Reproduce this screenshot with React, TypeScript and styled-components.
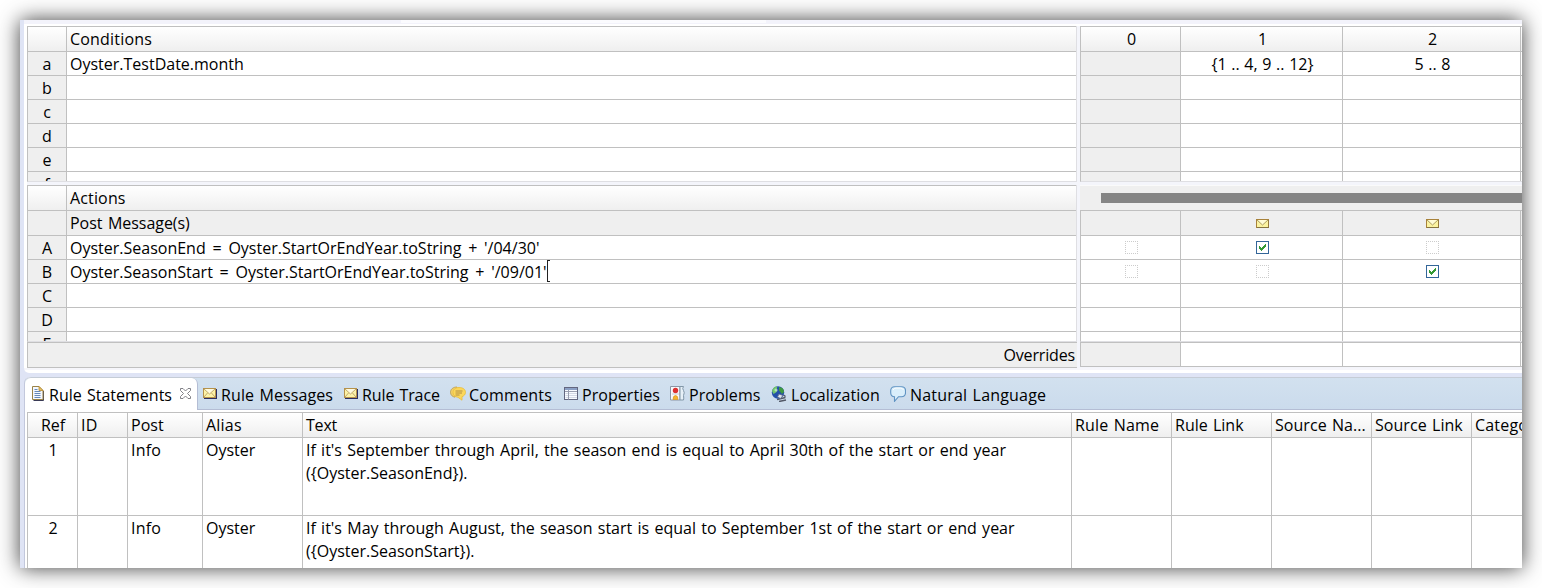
import React from "react";
import styled, { createGlobalStyle } from "styled-components";

const LINE = "#c0c0c0";
const SOFT = "#dfdfe3";
const HEAD = "linear-gradient(#ffffff, #efefef)";

const GlobalStyle = createGlobalStyle`
  body { margin: 0; background: #fff; overflow: hidden; }
  *, *::before, *::after { box-sizing: border-box; }
  #root { font-family: "Open Sans", "Noto Sans", sans-serif; font-size: 16px; line-height: 24px; word-spacing: 1.1px; color: #000; }
`;

const Page = styled.div`
  width: 1542px;
  height: 588px;
  padding: 20px;
  overflow: hidden;
`;

const Window = styled.div`
  width: 1502px;
  height: 548px;
  padding-left: 4px;
  overflow: hidden;
  background: #dfe4f5;
  box-shadow: 0 0 20px rgba(0, 0, 0, 0.76);
`;

const Editor = styled.div`
  height: 353px;
  padding: 4px 0 0 1px;
  background:
    linear-gradient(#fbfbfe, #fbfbfe) 377px 0 / 365px 3px no-repeat,
    linear-gradient(#f3f3fb 4px, #ffffff 4px, #ffffff 348px, #f6f6fb 348px, #f6f6fb 350px, #ffffff 350px);
  border-bottom-left-radius: 5px;
`;

const Split = styled.div`
  display: flex;
  gap: 3px;
  margin: 2px 0 0 2px;
  height: 342px;
  background: #f4f5fb;
`;

const LeftPane = styled.div`
  width: 1050px;
  display: flex;
  flex-direction: column;
`;

const RightPane = styled.div`
  width: 442px;
  overflow: hidden;
  display: flex;
  flex-direction: column;
`;

const Grid = styled.div<{ $h: number; $edge?: boolean }>`
  height: ${(p) => p.$h}px;
  overflow: hidden;
  flex: none;
  background: #fff;
  border-left: 1px solid ${LINE};
  border-bottom: 1px solid ${SOFT};
  border-right: ${(p) => (p.$edge ? `1px solid ${SOFT}` : "none")};
`;

const Gap = styled.div`
  height: 3px;
  flex: none;
`;

const Row = styled.div<{ $h?: number; $bg?: string; $top?: boolean }>`
  display: flex;
  height: ${(p) => p.$h ?? 24}px;
  background: ${(p) => p.$bg ?? "#fff"};
  border-bottom: 1px solid ${LINE};
  border-top: ${(p) => (p.$top ? `1px solid ${LINE}` : "none")};
`;

const RowKey = styled.div<{ $bg?: string }>`
  width: 39px;
  flex: none;
  text-align: center;
  background: ${(p) => p.$bg ?? "#efefef"};
  border-right: 1px solid ${LINE};
`;

const RowText = styled.div<{ $ls?: number; $ws?: number }>`
  flex: 1;
  padding-left: 3px;
  white-space: pre;
  letter-spacing: ${(p) => p.$ls ?? 0}px;
  word-spacing: ${(p) => p.$ws ?? 0}px;
`;

const Caret = styled.span`
  display: inline-block;
  width: 3px;
  height: 22px;
  vertical-align: top;
  border: solid #222;
  border-width: 1px 0 1px 1px;
`;

const Cell = styled.div<{ $w: number; $bg?: string }>`
  width: ${(p) => p.$w}px;
  flex: none;
  display: flex;
  justify-content: center;
  padding-left: 2px;
  background: ${(p) => p.$bg ?? "transparent"};
  border-right: 1px solid ${LINE};
  white-space: pre;
  word-spacing: 0.5px;
`;

const ScrollHeader = styled.div`
  height: 25px;
  flex: none;
  padding: 7px 0 0 21px;
  background: #efefef;
  border-top: 1px solid #fafafa;
`;

const ScrollThumb = styled.div`
  height: 10px;
  background: #858585;
`;

const OverridesLabel = styled.div`
  height: 26px;
  border: 1px solid ${LINE};
  border-right: none;
  background: #efefef;
  text-align: right;
  padding-right: 2px;
  letter-spacing: -0.15px;
`;

const OverridesRow = styled.div`
  display: flex;
  height: 25px;
  border: 1px solid ${LINE};
  border-right: none;
  background: #fff;
`;

const IconSlot = styled.span<{ $top: number }>`
  display: block;
  line-height: 0;
  padding-top: ${(p) => p.$top}px;
`;

const Views = styled.div`
  margin-top: 4px;
  height: 191px;
  background: #fff;
  border-left: 1px solid #c3c8dc;
  border-top-left-radius: 6px;
`;

const TabBar = styled.div`
  display: flex;
  height: 33px;
  background: linear-gradient(#d2e1ef, #cbdbec);
  border-top: 1px solid #c5ccd6;
  border-bottom: 1px solid #b4bdd4;
  border-top-left-radius: 6px;
`;

const Tab = styled.div<{ $w: number; $ls: number; $gap: number }>`
  width: ${(p) => p.$w}px;
  flex: none;
  display: flex;
  padding-top: 5px;
  gap: ${(p) => p.$gap}px;
  white-space: pre;
  letter-spacing: ${(p) => p.$ls}px;
  svg { flex: none; margin-top: 3px; }
`;

const ActiveTab = styled(Tab)`
  height: 32px;
  background: #fff;
  padding-left: 7px;
  margin-right: 5px;
  border-right: 1px solid #b4bdd4;
  border-top-right-radius: 6px;
  border-top-left-radius: 6px;
`;

const TabTitle = styled.span`
  width: 126px;
`;

const Table = styled.div`
  margin: 2px 0 0 2px;
  border-left: 1px solid ${LINE};
  border-top: 1px solid ${LINE};
`;

const TCell = styled.div<{ $w: number; $ls?: number; $center?: boolean }>`
  width: ${(p) => p.$w}px;
  flex: none;
  overflow: hidden;
  padding-left: ${(p) => (p.$center ? 1 : 3)}px;
  text-align: ${(p) => (p.$center ? "center" : "left")};
  border-right: 1px solid ${LINE};
  white-space: pre;
  letter-spacing: ${(p) => p.$ls ?? 0}px;
`;

const TextLine = styled.div`
  height: 23px;
`;

const Envelope = () => (
  <svg width="13" height="9" viewBox="0 0 13 9">
    <rect x="0.5" y="0.5" width="12" height="8" fill="#fbf3a0" stroke="#a8823a" />
    <path d="M1 8.5h12V1" fill="none" stroke="#86743f" />
    <path d="M2 1h9L6.500 6z" fill="#fffcd8" />
    <path d="M1 1l5.500 5L12 1" fill="none" stroke="#b0a068" />
  </svg>
);

const TabEnvelope = () => (
  <svg width="14" height="15" viewBox="0 0 14 15">
    <path d="M1 12.500h13M13.500 3v10" stroke="#2c2f62" fill="none" />
    <rect x="0.500" y="2.500" width="12" height="9" fill="#fdf3a8" stroke="#b5924c" />
    <path d="M1.500 3h10L6.500 8z" fill="#fffbe0" />
    <path d="M1 3l5.500 5L12 3M1 11l3.500-4M12 11L8.500 7" fill="none" stroke="#b9a069" strokeWidth="0.9" />
  </svg>
);

const CheckOn = () => (
  <svg width="13" height="13" viewBox="0 0 13 13" shapeRendering="crispEdges">
    <rect x="0" y="0" width="13" height="13" fill="#336699" />
    <rect x="1" y="1" width="11" height="11" fill="#fff" />
    <path
      d="M3.500 5v3M4.500 6v3M5.500 7v3M6.500 6v3M7.500 5v3M8.500 4v3M9.500 3v3"
      stroke="#339933"
      strokeWidth="1"
    />
  </svg>
);

const CheckOff = () => (
  <svg width="13" height="13" viewBox="0 0 13 13" shapeRendering="crispEdges">
    <path d="M0 .5h13M0 12.500h13M.5 0v13M12.500 0v13" stroke="#cccccc" strokeDasharray="1 1" fill="none" />
  </svg>
);

const DocIcon = () => (
  <svg width="12" height="15" viewBox="0 0 12 15">
    <path d="M1.500 14.500h10V5" stroke="#393a55" fill="none" />
    <path d="M.5.500h6.500l4 4v9H.5z" fill="#f4f8ff" stroke="#9a8348" />
    <path d="M7 .5v4h4z" fill="#e8c468" stroke="#b78a30" strokeWidth=".8" />
    <path d="M2.500 3.500h3M2.500 5.500h6M2.500 7.500h6M2.500 9.500h6M2.500 11.500h6" stroke="#6688b8" />
  </svg>
);

const CloseIcon = () => (
  <svg width="11" height="14" viewBox="0 0 11 14">
    <path d="M.5 2.500h2.500l2.500 2.500L8 2.500h2.500V4.500L7.500 7.500l3 3v2H8L5.500 10 3 12.500H.5v-2l3-3-3-3z" fill="#fff" stroke="#74747a" strokeWidth=".9" />
  </svg>
);

const CommentIcon = () => (
  <svg width="16" height="15" viewBox="0 0 16 15">
    <path d="M7 1C3 1 .5 3.300.5 6.200c0 3 2 4.500 4.500 5z" fill="#f0cf6a" stroke="#b99b4e" strokeWidth=".8" />
    <path d="M9 1.500c4 0 6.500 2 6.500 4.800 0 2-1.500 3.700-3.500 4.400v3.500L8 11.300C4.800 11 3 9 3 6.500 3 3.500 5.500 1.500 9 1.500z" fill="#fbd75b" stroke="#eabd36" strokeWidth=".8" />
    <path d="M5.500 5h7M5.500 7h6.500M5.500 9h4" stroke="#a98744" strokeWidth=".9" />
  </svg>
);

const PropertiesIcon = () => (
  <svg width="14" height="15" viewBox="0 0 14 15">
    <rect x=".5" y="1.500" width="13" height="12" fill="#f8fbff" stroke="#63677f" />
    <path d="M1 3h12" stroke="#8ba0c5" strokeWidth="2" />
    <path d="M1 5.500h12M4.500 4v9.500" stroke="#9a9fb0" />
    <path d="M5 7.500h8M5 9.500h8M5 11.500h8M1.500 7.500h2.500M1.500 9.500h2.500M1.500 11.500h2.500" stroke="#c4cada" strokeWidth=".7" />
  </svg>
);

const ProblemsIcon = () => (
  <svg width="15" height="15" viewBox="0 0 15 15">
    <path d="M.5.500h9.500v13.500H.5z" fill="#f9f9fb" stroke="#8b96a5" />
    <path d="M10 .5h3.500q-1.500 2 0 4t0 5q.5 3 0 4.500H10z" fill="#e7f0f7" stroke="#8297a8" />
    <circle cx="5.500" cy="4.500" r="2.700" fill="#dd3131" />
    <path d="M2 8h7" stroke="#b4bac2" strokeWidth=".7" />
    <path d="M3 13.500q0-4 2.500-4t2.500 4z" fill="#f4b52f" stroke="#d99116" strokeWidth=".6" />
  </svg>
);

const GlobeIcon = () => (
  <svg width="16" height="16" viewBox="0 0 16 16">
    <path d="M6 13.500l8.500-2M8 15.500l7-1.500M12.500 9l2 1.500" stroke="#525867" strokeWidth="1.500" fill="none" />
    <circle cx="7" cy="6.500" r="6.200" fill="#244fa8" />
    <path d="M1 5Q2 1 6 .3 7 2 5 3.500q2 1 0 3L2.500 8z" fill="#72c56b" />
    <path d="M8 1q5 .5 5 5l-2 2-3-3.500z" fill="#3d9a42" />
    <circle cx="5" cy="4" r="1.600" fill="#c9efcb" opacity=".75" />
    <path d="M8 8l4 1.500L9.500 12.500 6.500 11z" fill="#e0e5ed" stroke="#5c6c88" strokeWidth=".8" />
  </svg>
);

const BubbleIcon = () => (
  <svg width="16" height="16" viewBox="0 0 16 16">
    <path d="M4.500.7h7c2.500 0 4 1.800 4 4v2c0 2.500-1.500 4-4 4H8.500L4.500 15.300V10.700C2 10.500.7 9 .7 6.700v-2c0-2.200 1.500-4 3.800-4z" fill="#d9eefb" stroke="#5f93c2" strokeWidth="1.100" />
    <path d="M3 4q1-2 3-2h4.500q2 0 3 2" stroke="#fff" fill="none" />
  </svg>
);

const conditions: { key: string; text?: string; one?: string; two?: string }[] = [
  { key: "a", text: "Oyster.TestDate.month", one: "{1 .. 4, 9 .. 12}", two: "5 .. 8" },
  { key: "b" }, { key: "c" }, { key: "d" }, { key: "e" }, { key: "f" },
];

const actions: { key: string; text?: string; checks?: boolean[]; caret?: boolean }[] = [
  { key: "A", text: "Oyster.SeasonEnd = Oyster.StartOrEndYear.toString + '/04/30'", checks: [false, true, false] },
  { key: "B", text: "Oyster.SeasonStart = Oyster.StartOrEndYear.toString + '/09/01'", checks: [false, false, true], caret: true },
  { key: "C" }, { key: "D" }, { key: "E" },
];

const tabs = [
  { label: "Rule Messages", icon: <TabEnvelope />, w: 141, gap: 4, ls: 0.1 },
  { label: "Rule Trace", icon: <TabEnvelope />, w: 106, gap: 4, ls: -0.1 },
  { label: "Comments", icon: <CommentIcon />, w: 114, gap: 3, ls: 0.2 },
  { label: "Properties", icon: <PropertiesIcon />, w: 106, gap: 4, ls: 0.05 },
  { label: "Problems", icon: <ProblemsIcon />, w: 101, gap: 4, ls: 0.05 },
  { label: "Localization", icon: <GlobeIcon />, w: 119, gap: 4, ls: 0.05 },
  { label: "Natural Language", icon: <BubbleIcon />, w: 180, gap: 4, ls: 0.18 },
];

const columns = [
  { label: "Ref", w: 50, ls: -0.1 },
  { label: "ID", w: 50, ls: 0.3 },
  { label: "Post", w: 75, ls: 0 },
  { label: "Alias", w: 100, ls: 0.2 },
  { label: "Text", w: 769, ls: -0.2 },
  { label: "Rule Name", w: 100, ls: 0.15 },
  { label: "Rule Link", w: 100, ls: 0 },
  { label: "Source Na...", w: 100, ls: 0.05 },
  { label: "Source Link", w: 100, ls: 0.05 },
  { label: "Category", w: 100, ls: 0.2 },
];

const statements = [
  { ref: "1", lines: ["If it's September through April, the season end is equal to April 30th of the start or end year", "({Oyster.SeasonEnd})."] },
  { ref: "2", lines: ["If it's May through August, the season start is equal to September 1st of the start or end year", "({Oyster.SeasonStart})."] },
];

export default function App() {
  return (
    <>
      <GlobalStyle />
      <Page>
        <Window>
          <Editor>
            <Split>
              <LeftPane>
                <Grid $h={156} $edge>
                  <Row $h={26} $bg={HEAD} $top>
                    <RowKey $bg="transparent" />
                    <RowText $ls={0.2}>Conditions</RowText>
                  </Row>
                  {conditions.map((c) => (
                    <Row key={c.key}>
                      <RowKey>{c.key}</RowKey>
                      <RowText>{c.text}</RowText>
                    </Row>
                  ))}
                </Grid>
                <Gap />
                <Grid $h={157} $edge>
                  <Row $h={26} $bg={HEAD} $top>
                    <RowKey $bg="transparent" />
                    <RowText $ls={0.15}>Actions</RowText>
                  </Row>
                  <Row $h={25} $bg="#efefef">
                    <RowKey />
                    <RowText $ls={-0.05} $ws={1.5}>Post Message(s)</RowText>
                  </Row>
                  {actions.map((a) => (
                    <Row key={a.key}>
                      <RowKey>{a.key}</RowKey>
                      <RowText $ws={2.6}>
                        {a.text}
                        {a.caret && <Caret />}
                      </RowText>
                    </Row>
                  ))}
                </Grid>
                <OverridesLabel>Overrides</OverridesLabel>
              </LeftPane>
              <RightPane>
                <Grid $h={156}>
                  <Row $h={26} $bg={HEAD} $top>
                    <Cell $w={100}>0</Cell>
                    <Cell $w={162}>1</Cell>
                    <Cell $w={178}>2</Cell>
                  </Row>
                  {conditions.map((c) => (
                    <Row key={c.key}>
                      <Cell $w={100} $bg="#efefef" />
                      <Cell $w={162}>{c.one}</Cell>
                      <Cell $w={178}>{c.two}</Cell>
                    </Row>
                  ))}
                </Grid>
                <Gap />
                <ScrollHeader>
                  <ScrollThumb />
                </ScrollHeader>
                <Grid $h={132}>
                  <Row $h={26} $bg="#efefef" $top>
                    <Cell $w={100} />
                    <Cell $w={162}><IconSlot $top={8}><Envelope /></IconSlot></Cell>
                    <Cell $w={178}><IconSlot $top={8}><Envelope /></IconSlot></Cell>
                  </Row>
                  {actions.map((a) => (
                    <Row key={a.key}>
                      {[100, 162, 178].map((w, i) => (
                        <Cell key={w} $w={w}>
                          {a.checks && <IconSlot $top={5}>{a.checks[i] ? <CheckOn /> : <CheckOff />}</IconSlot>}
                        </Cell>
                      ))}
                    </Row>
                  ))}
                </Grid>
                <OverridesRow>
                  <Cell $w={100} $bg="#efefef" />
                  <Cell $w={162} />
                  <Cell $w={178} />
                </OverridesRow>
              </RightPane>
            </Split>
          </Editor>
          <Views>
            <TabBar>
              <ActiveTab $w={173} $gap={5} $ls={0}>
                <DocIcon />
                <TabTitle>Rule Statements</TabTitle>
                <CloseIcon />
              </ActiveTab>
              {tabs.map((t) => (
                <Tab key={t.label} $w={t.w} $gap={t.gap} $ls={t.ls}>
                  {t.icon}
                  <span>{t.label}</span>
                </Tab>
              ))}
            </TabBar>
            <Table>
              <Row $h={25} $bg={HEAD}>
                {columns.map((c, i) => (
                  <TCell key={c.label} $w={c.w} $ls={c.ls} $center={i === 0}>{c.label}</TCell>
                ))}
              </Row>
              {statements.map((s) => (
                <Row key={s.ref} $h={78}>
                  <TCell $w={50} $center>{s.ref}</TCell>
                  <TCell $w={50} />
                  <TCell $w={75} $ls={0.2}>Info</TCell>
                  <TCell $w={100}>Oyster</TCell>
                  <TCell $w={769}>
                    {s.lines.map((l) => (
                      <TextLine key={l}>{l}</TextLine>
                    ))}
                  </TCell>
                  {columns.slice(5).map((c) => (
                    <TCell key={c.label} $w={c.w} />
                  ))}
                </Row>
              ))}
            </Table>
          </Views>
        </Window>
      </Page>
    </>
  );
}
